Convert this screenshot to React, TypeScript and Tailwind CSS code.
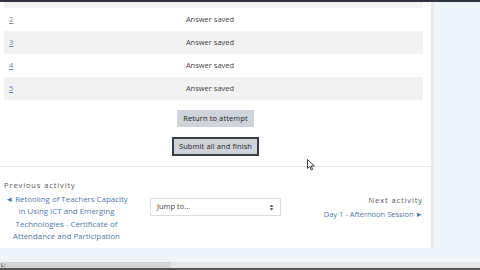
import React from 'react';

const rows = [
  { n: '2', bg: 'bg-white' },
  { n: '3', bg: 'bg-[#f2f2f2]' },
  { n: '4', bg: 'bg-white' },
  { n: '5', bg: 'bg-[#f2f2f2]' },
];

const App = () => {
  return (
    <div className="w-[480px] h-[270px] overflow-hidden bg-[#eef4f7] flex flex-col font-['Open_Sans',sans-serif] text-[#333]">
      <div className="h-[2px] bg-[#2e3140] shrink-0"></div>
      <div className="flex h-[246px] shrink-0">
        <div className="w-[434px] bg-white border-r-[3px] border-[#e6eaec] flex flex-col">
          <div className="px-[4px] pr-[8px]">
            <div className="h-[6px] bg-[#f2f2f2]"></div>
            {rows.map((r) => (
              <div key={r.n} className={`${r.bg} h-[23px] flex items-center text-[7.5px]`}>
                <span className={`w-[155px] pl-[5px] underline ${r.n === '2' ? 'text-[#8a8a8a] no-underline' : 'text-[#6d86ab]'}`}>{r.n}</span>
                <span className="w-[102px] text-center text-[#444]">Answer saved</span>
              </div>
            ))}
          </div>

          <div className="flex flex-col items-center mt-[10px] gap-[10px]">
            <button className="h-[17px] px-[6px] bg-[#ced4da] text-[7.5px] text-[#222] tracking-[0.1px]">Return to attempt</button>
            <button className="h-[19px] px-[5px] bg-[#ced4da] border-[2px] border-[#3a3d44] text-[7.5px] text-[#222] tracking-[0.1px]">Submit all and finish</button>
          </div>

          <div className="mt-[10px] border-t border-[#e8e8e8]"></div>

          <div className="flex items-start px-[4px] pr-[8px] pt-[13px]">
            <div className="w-[125px]">
              <div className="text-[7.5px] tracking-[0.9px] text-[#555] leading-[10px]">Previous activity</div>
              <div className="mt-[3px] -mx-[2px] text-center text-[7.9px] leading-[12.3px] text-[#5577a8]">
                ◄ Retooling of Teachers Capacity<br />in Using ICT and Emerging<br />Technologies - Certificate of<br />Attendance and Participation
              </div>
            </div>
            <div className="ml-[21px] mt-[18px] w-[131px] h-[18px] border border-[#dcdcdc] flex items-center justify-between px-[6px] text-[7.5px] text-[#444]">
              <span>Jump to...</span>
              <svg width="5" height="7" viewBox="0 0 5 7">
                <path d="M0.5 2.8 L2.5 0.8 L4.5 2.8 Z M0.5 4.2 L2.5 6.2 L4.5 4.2 Z" fill="#444" />
              </svg>
            </div>
            <div className="flex-1 flex flex-col items-end pt-[15px]">
              <div className="text-[7.5px] tracking-[0.9px] text-[#555] leading-[10px]">Next activity</div>
              <div className="mt-[4px] text-[7.5px] text-[#5577a8] leading-[10px]">Day 1 - Afternoon Session ►</div>
            </div>
          </div>
        </div>
        <div className="flex-1"></div>
      </div>
      <div className="h-[14px] shrink-0"></div>
      <div className="flex-1 flex bg-[#e6e6e6] border-b-[2px] border-[#555]">
        <div className="w-[171px] bg-[#d4d4d4] text-[6px] leading-[6px] pl-[1px] text-[#333]">L:</div>
      </div>

      <svg className="absolute left-[307px] top-[159px]" width="8" height="12" viewBox="0 0 8 12">
        <path d="M0.5 0.5 L0.5 9.5 L2.8 7.4 L4.3 11 L5.6 10.4 L4.2 7 L7.3 7 Z" fill="#fff" stroke="#222" strokeWidth="0.9" />
      </svg>
    </div>
  );
};

export default App;
